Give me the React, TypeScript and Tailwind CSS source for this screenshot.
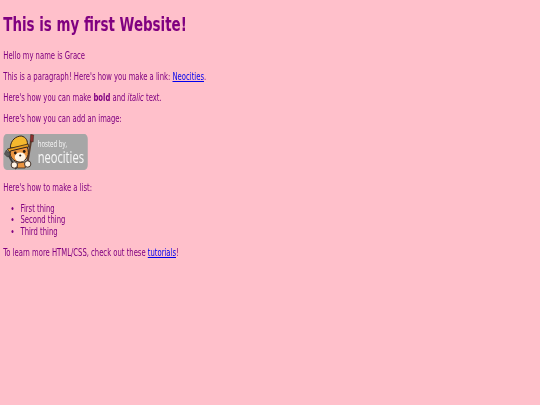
export default function App() {
  const p = "my-[9.4px] leading-[11.6px]";
  return (
    <div className="w-[540px] h-[405px] overflow-hidden bg-[#ffc0cb]">
      <div className="w-[800px] origin-top-left scale-x-[0.675] blur-[0.3px] pl-[4.8px] text-[10.13px] text-[#800080] font-['DejaVu_Sans',sans-serif]">
        <h1 className="pt-[13px] mb-[13.5px] text-[19.9px] leading-[23.3px] font-bold">This is my first Website!</h1>
        <p className={p}>Hello my name is Grace</p>
        <p className={p}>
          This is a paragraph! Here's how you make a link: <a className="text-[#0000ee] underline" href="#">Neocities</a>.
        </p>
        <p className={p}>
          Here's how you can make <strong className="font-bold">bold</strong> and <em className="italic">italic</em> text.
        </p>
        <p className={p}>Here's how you can add an image:</p>
        <div className="w-[125px] h-[36px] rounded-[5px] bg-[#a6a6a6] flex items-center overflow-hidden">
          <svg viewBox="0 0 34 36" preserveAspectRatio="none" className="w-[50px] h-[36px] shrink-0">
            <path d="M4 19 L13 35" stroke="#3d3d3d" strokeWidth="2" />
            <path d="M1 20 L3 16 L5 19 L7 16 L7 21 L4 23 Z" fill="#5a5a5a" stroke="#333" strokeWidth="0.5" />
            <path d="M28 6 L24 30" stroke="#5b3a2a" strokeWidth="2" />
            <path d="M27.5 0.5 L30.5 1 L30 8 L27 7.5 Z" fill="#8f3030" stroke="#3a2418" strokeWidth="0.5" />
            <path d="M7 14 C7 6 13 2 18 2 C23 3 25 7 24 12 Z" fill="#f4b82e" stroke="#33231a" strokeWidth="1" />
            <path d="M4 15 L25 10 L25.5 13 L6 18 Z" fill="#e8a020" stroke="#33231a" strokeWidth="0.8" />
            <path d="M7 17 L24 13 C27 20 24 27 17 28 C10 28 6 23 7 17 Z" fill="#ea9440" stroke="#33231a" strokeWidth="1" />
            <ellipse cx="17" cy="23" rx="5.5" ry="4.5" fill="#fff4e6" />
            <circle cx="12" cy="19" r="1.4" fill="#1e1410" />
            <circle cx="21" cy="17.5" r="1.4" fill="#1e1410" />
            <circle cx="17" cy="21.5" r="1.1" fill="#1e1410" />
            <path d="M14 29 L22 28 L22 34 L14 34 Z" fill="#ea9440" stroke="#33231a" strokeWidth="0.8" />
            <circle cx="11" cy="31" r="3.2" fill="#fff4e6" stroke="#33231a" strokeWidth="0.9" />
            <circle cx="24.5" cy="30" r="3.2" fill="#fff4e6" stroke="#33231a" strokeWidth="0.9" />
          </svg>
          <div className="flex flex-col text-[#f7f7f7] font-['Open_Sans',sans-serif] ml-[1px]">
            <span className="text-[9px] leading-[10px]">hosted by,</span>
            <span className="text-[16.5px] leading-[16px]">neocities</span>
          </div>
        </div>
        <p className="mt-[11.8px] mb-[9.4px] leading-[11.6px]">Here's how to make a list:</p>
        <ul className="list-disc pl-[25.5px] my-[9.4px]">
          <li className="leading-[11.6px]">First thing</li>
          <li className="leading-[11.6px]">Second thing</li>
          <li className="leading-[11.6px]">Third thing</li>
        </ul>
        <p className={p}>
          To learn more HTML/CSS, check out these <a className="text-[#0000ee] underline" href="#">tutorials</a>!
        </p>
      </div>
    </div>
  );
}
